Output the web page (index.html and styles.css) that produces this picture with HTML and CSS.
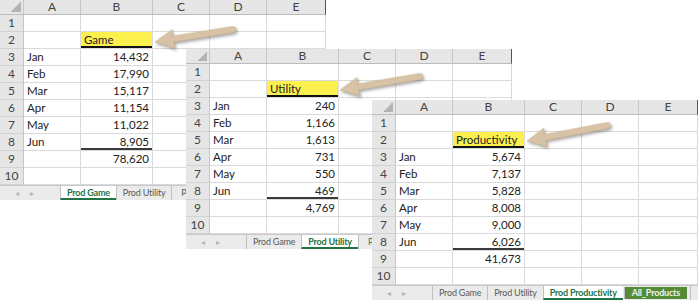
FILE: index.html
```html
<!DOCTYPE html>
<html lang="en">
<head>
    <meta charset="UTF-8">
    <title>Product Sheets</title>
    <link rel="stylesheet" href="styles.css">
</head>
<body>
    <div class="canvas">

        <!-- Sheet 1: Prod Game -->
        <div class="sheet sheet-1">
            <table class="grid">
                <colgroup>
                    <col class="c-row"><col class="c-a"><col class="c-b"><col class="c-c"><col class="c-d"><col class="c-e">
                </colgroup>
                <tr class="head"><th class="corner"></th><th>A</th><th>B</th><th>C</th><th>D</th><th class="last">E</th></tr>
                <tr><th>1</th><td></td><td></td><td></td><td></td><td></td></tr>
                <tr><th>2</th><td></td><td class="title">Game</td><td></td><td></td><td></td></tr>
                <tr><th>3</th><td>Jan</td><td class="num">14,432</td><td></td><td></td><td></td></tr>
                <tr><th>4</th><td>Feb</td><td class="num">17,990</td><td></td><td></td><td></td></tr>
                <tr><th>5</th><td>Mar</td><td class="num">15,117</td><td></td><td></td><td></td></tr>
                <tr><th>6</th><td>Apr</td><td class="num">11,154</td><td></td><td></td><td></td></tr>
                <tr><th>7</th><td>May</td><td class="num">11,022</td><td></td><td></td><td></td></tr>
                <tr><th>8</th><td>Jun</td><td class="num underline">8,905</td><td></td><td></td><td></td></tr>
                <tr><th>9</th><td></td><td class="num">78,620</td><td></td><td></td><td></td></tr>
                <tr><th>10</th><td></td><td></td><td></td><td></td><td></td></tr>
            </table>
            <div class="tabs clipped">
                <div class="tab-nav"><span>&#9666;</span><span>&#9656;</span></div>
                <div class="tab active">Prod Game</div>
                <div class="tab">Prod Utility</div>
                <div class="tab stub">P</div>
            </div>
        </div>

        <!-- Sheet 2: Prod Utility -->
        <div class="sheet sheet-2">
            <table class="grid">
                <colgroup>
                    <col class="c-row"><col class="c-a"><col class="c-b"><col class="c-c"><col class="c-d"><col class="c-e">
                </colgroup>
                <tr class="head"><th class="corner"></th><th>A</th><th>B</th><th>C</th><th>D</th><th class="last">E</th></tr>
                <tr><th>1</th><td></td><td></td><td></td><td></td><td></td></tr>
                <tr><th>2</th><td></td><td class="title">Utility</td><td></td><td></td><td></td></tr>
                <tr><th>3</th><td>Jan</td><td class="num">240</td><td></td><td></td><td></td></tr>
                <tr><th>4</th><td>Feb</td><td class="num">1,166</td><td></td><td></td><td></td></tr>
                <tr><th>5</th><td>Mar</td><td class="num">1,613</td><td></td><td></td><td></td></tr>
                <tr><th>6</th><td>Apr</td><td class="num">731</td><td></td><td></td><td></td></tr>
                <tr><th>7</th><td>May</td><td class="num">550</td><td></td><td></td><td></td></tr>
                <tr><th>8</th><td>Jun</td><td class="num underline">469</td><td></td><td></td><td></td></tr>
                <tr><th>9</th><td></td><td class="num">4,769</td><td></td><td></td><td></td></tr>
                <tr><th>10</th><td></td><td></td><td></td><td></td><td></td></tr>
            </table>
            <div class="tabs clipped">
                <div class="tab-nav"><span>&#9666;</span><span>&#9656;</span></div>
                <div class="tab">Prod Game</div>
                <div class="tab active">Prod Utility</div>
                <div class="tab stub">Pr</div>
            </div>
        </div>

        <!-- Sheet 3: Prod Productivity -->
        <div class="sheet sheet-3">
            <table class="grid">
                <colgroup>
                    <col class="c-row"><col class="c-a"><col class="c-b"><col class="c-c"><col class="c-d"><col class="c-e">
                </colgroup>
                <tr class="head"><th class="corner"></th><th>A</th><th>B</th><th>C</th><th>D</th><th class="last">E</th></tr>
                <tr><th>1</th><td></td><td></td><td></td><td></td><td></td></tr>
                <tr><th>2</th><td></td><td class="title">Productivity</td><td></td><td></td><td></td></tr>
                <tr><th>3</th><td>Jan</td><td class="num">5,674</td><td></td><td></td><td></td></tr>
                <tr><th>4</th><td>Feb</td><td class="num">7,137</td><td></td><td></td><td></td></tr>
                <tr><th>5</th><td>Mar</td><td class="num">5,828</td><td></td><td></td><td></td></tr>
                <tr><th>6</th><td>Apr</td><td class="num">8,008</td><td></td><td></td><td></td></tr>
                <tr><th>7</th><td>May</td><td class="num">9,000</td><td></td><td></td><td></td></tr>
                <tr><th>8</th><td>Jun</td><td class="num underline">6,026</td><td></td><td></td><td></td></tr>
                <tr><th>9</th><td></td><td class="num">41,673</td><td></td><td></td><td></td></tr>
                <tr><th>10</th><td></td><td></td><td></td><td></td><td></td></tr>
            </table>
            <div class="tabs">
                <div class="tab-nav"><span>&#9666;</span><span>&#9656;</span></div>
                <div class="tab">Prod Game</div>
                <div class="tab">Prod Utility</div>
                <div class="tab active">Prod Productivity</div>
                <div class="tab group">All_Products</div>
                <div class="tab end"></div>
            </div>
        </div>

        <!-- Callout arrows pointing at each title cell -->
        <svg class="arrows" width="700" height="301" viewBox="0 0 700 301">
            <path transform="translate(155 42) rotate(-9.1)" d="M0 0 L19 -9.5 L18 -3 L79 -3 Q82 -3 82 0 Q82 3 79 3 L18 3 L19 9.5 Z"/>
            <path transform="translate(340 90) rotate(-9.6)" d="M0 0 L19 -9.5 L18 -3 L81 -3 Q84 -3 84 0 Q84 3 81 3 L18 3 L19 9.5 Z"/>
            <path transform="translate(527 141) rotate(-10.9)" d="M0 0 L19 -9.5 L18 -3 L82 -3 Q85 -3 85 0 Q85 3 82 3 L18 3 L19 9.5 Z"/>
        </svg>
    </div>
</body>
</html>
```

FILE: styles.css
```css
* {
    margin: 0;
    padding: 0;
    box-sizing: border-box;
}

body {
    font-family: Lato, "Open Sans", sans-serif;
    background: #fff;
    color: #222;
}

.canvas {
    position: relative;
    width: 700px;
    height: 301px;
    overflow: hidden;
    background: #fff;
}

/* each sheet is a window on a free canvas */
.sheet {
    position: absolute;
    width: 326px;
    background: #fff;
}

.sheet-1 { left: 0; top: 0; }
.sheet-2 { left: 186px; top: 49px; }
.sheet-3 { left: 372px; top: 100px; }

.grid {
    border-collapse: separate;
    border-spacing: 0;
    table-layout: fixed;
    width: 326px;
    font-size: 11.5px;
}

.c-row { width: 24px; }
.c-a { width: 57px; }
.c-b { width: 72px; }
.c-c { width: 57px; }
.c-d { width: 57px; }
.c-e { width: 59px; }

.grid tr {
    height: 17px;
}

.grid tr.head {
    height: 15px;
}

.grid th {
    background: #e6e6e6;
    color: #444;
    font-weight: normal;
    font-size: 12px;
    text-align: center;
    border-right: 1px solid #c6c6c6;
    border-bottom: 1px solid #d2d2d2;
    line-height: 14px;
}

.grid .head th {
    border-bottom: 1px solid #bcbcbc;
}

.grid .head th.last {
    border-right: 1px solid #217346;
}

.grid th.corner {
    background-color: #e6e6e6;
    background-image: linear-gradient(to bottom right, transparent 50%, #b4b4b4 50%);
    background-size: 10px 10px;
    background-position: right 2px bottom 2px;
    background-repeat: no-repeat;
}

.grid td {
    border-right: 1px solid #dadada;
    border-bottom: 1px solid #dadada;
    padding: 0 3px;
    line-height: 14px;
    white-space: nowrap;
    overflow: hidden;
}

.grid td.num {
    text-align: right;
    padding-right: 3px;
}

.grid td.title {
    background: #fbf04e;
    box-shadow: inset 0 -2px 0 #111;
}

.grid td.underline {
    box-shadow: inset 0 -2px 0 #3a3a3a;
}

/* sheet tab strip */
.tabs {
    display: flex;
    height: 15px;
    background: #ebebeb;
    border-top: 1px solid #c8c8c8;
    font-size: 9px;
    letter-spacing: -0.2px;
    color: #5a5a5a;
    line-height: 14px;
    overflow: hidden;
}

/* only the part left of the next window shows */
.tabs.clipped {
    width: 186px;
}

.tab-nav {
    flex-shrink: 0;
    width: 60px;
    display: flex;
    gap: 11px;
    padding-left: 15px;
    color: #b5b5b5;
    font-size: 8px;
}

.tab {
    flex-shrink: 0;
    padding: 0 6px;
    border-left: 1px solid #c0c0c0;
    white-space: nowrap;
}

.tab.stub {
    flex-shrink: 1;
    min-width: 0;
    overflow: hidden;
    padding: 0 0 0 9px;
}

.tab.active {
    background: #fff;
    color: #217346;
    font-weight: bold;
    border-bottom: 2px solid #217346;
}

.tab.group {
    background: #558a36;
    color: #eef5e8;
    font-weight: bold;
    margin: 1px 0 1px 1px;
    padding: 0 7px;
    line-height: 12px;
}

.tab.end {
    padding: 0;
    margin-left: 3px;
}

.arrows {
    position: absolute;
    left: 0;
    top: 0;
    pointer-events: none;
}

.arrows path {
    fill: #d9c3a6;
    stroke: #c8ae8c;
    stroke-width: 0.6;
    filter: drop-shadow(1px 2px 1.5px rgba(0, 0, 0, 0.35));
}
```
